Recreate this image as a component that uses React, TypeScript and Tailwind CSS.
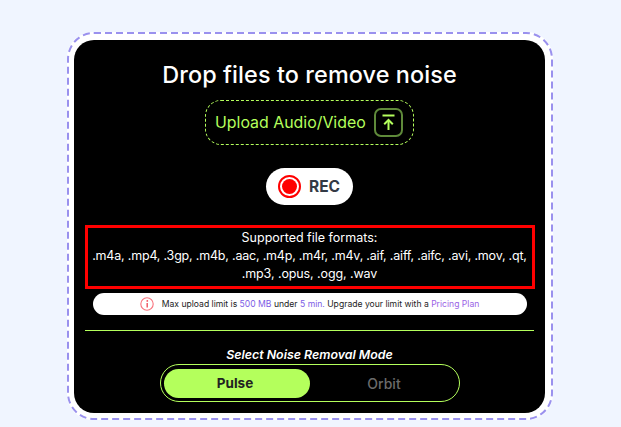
import React from 'react';

function UploadIcon() {
  return (
    <div className="flex items-center justify-center w-[29px] h-[29px] rounded-[7px] border-2 border-[#5f8a3a]">
      <svg width="15" height="17" viewBox="0 0 15 17" fill="none" stroke="#b4ff5c" strokeWidth="2">
        <path d="M1.5 1.5h12" />
        <path d="M7.5 16V6.5" />
        <path d="M3.2 10.2 7.5 6l4.3 4.2" />
      </svg>
    </div>
  );
}

function InfoIcon() {
  return (
    <svg width="14" height="14" viewBox="0 0 14 14" fill="none" className="mr-[8px]">
      <circle cx="7" cy="7" r="6.2" stroke="#f8727c" strokeWidth="1.1" />
      <circle cx="7.3" cy="3.9" r="0.9" fill="#f0505c" />
      <path d="M7.2 6v4.6" stroke="#f0505c" strokeWidth="1.4" />
    </svg>
  );
}

// the long dashes of the drop zone outline are not what css dashed gives
function DashedOutline() {
  return (
    <svg width="486" height="388" className="absolute left-0 top-0" fill="none">
      <rect x="1" y="1" width="484" height="386" rx="26" stroke="#9a91ee" strokeWidth="2" strokeDasharray="7 4" />
    </svg>
  );
}

export default function App() {
  return (
    <div className="h-[427px] overflow-hidden bg-[#f0f5ff] pt-[32px] pl-[67px] font-['Inter',sans-serif]">
      <div className="relative w-[486px] h-[388px] bg-white rounded-[26px] pt-[8px] pl-[7px]">
        <DashedOutline />
        <div className="relative h-[373px] w-[471px] bg-black rounded-[20px] flex flex-col items-center pt-[20px]">
          <h1 className="text-[23.4px] leading-[30px] font-medium text-white tracking-[0.1px]">Drop files to remove noise</h1>

          <div className="mt-[10px] w-[209px] h-[45px] rounded-[16px] border border-dashed border-[#b4ff5c] flex items-center justify-between pl-[9px] pr-[10px]">
            <span className="text-[15.9px] text-[#b4ff5c]">Upload Audio/Video</span>
            <UploadIcon />
          </div>

          <div className="mt-[23px] w-[87px] h-[37px] rounded-full bg-white flex items-center pl-[12px] gap-[8px]">
            <div className="w-[23px] h-[23px] rounded-full border-2 border-[#ff0000] flex items-center justify-center">
              <div className="w-[15px] h-[15px] rounded-full bg-[#ff0000]" />
            </div>
            <span className="text-[15.5px] font-bold text-[#333a45]">REC</span>
          </div>

          <div className="mt-[20px] w-[450px] h-[64px] border-[3px] border-[#ff0000] pb-[2px] flex flex-col items-center justify-center text-white text-[12.5px] leading-[18px] text-center">
            <span>Supported file formats:</span>
            <span className="whitespace-nowrap tracking-[-0.2px]">.m4a, .mp4, .3gp, .m4b, .aac, .m4p, .m4r, .m4v, .aif, .aiff, .aifc, .avi, .mov, .qt,</span>
            <span className="tracking-[-0.1px]">.mp3, .opus, .ogg, .wav</span>
          </div>

          <div className="mt-[4px] w-[434px] h-[22px] rounded-full bg-white flex items-center justify-center text-[8.6px] text-[#222222] whitespace-nowrap">
            <InfoIcon />
            <span>
              Max upload limit is <span className="text-[#7c5ce6]">500 MB</span> under <span className="text-[#7c5ce6]">5 min.</span> Upgrade your limit with a <span className="text-[#9a63e6]">Pricing Plan</span>
            </span>
          </div>

          <div className="mt-[15px] w-[449px] h-px bg-[#b4ff5c]" />

          <p className="mt-[16px] text-[12.4px] leading-[16px] font-semibold italic text-white">Select Noise Removal Mode</p>

          <div className="mt-[1px] w-[300px] h-[38px] rounded-full border border-[#b4ff5c] p-[3px] flex items-center">
            <div className="w-[146px] h-[29px] rounded-full bg-[#b4ff5c] flex items-center justify-center pr-[3px] text-[13.5px] font-bold text-[#222222]">Pulse</div>
            <div className="flex-1 text-center pl-[3px] text-[14px] font-medium text-[#6b6b6b]">Orbit</div>
          </div>
        </div>
      </div>
    </div>
  );
}
